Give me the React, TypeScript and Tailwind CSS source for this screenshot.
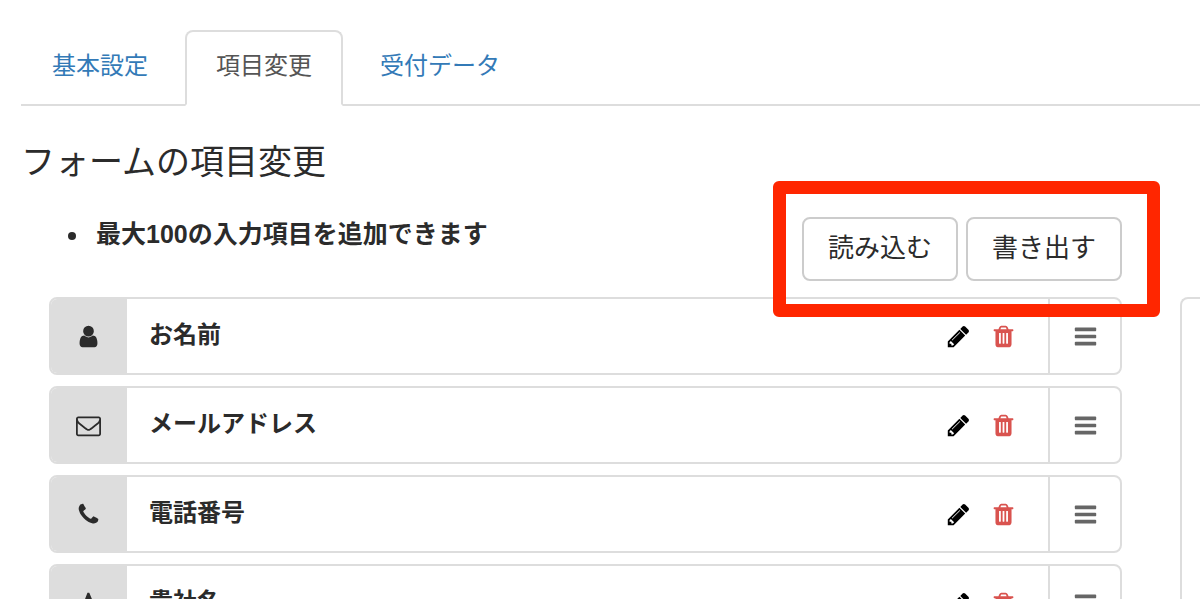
import React, { useState } from "react";

const ICONS = {
  user: "M1536 1399q0 109-62.500 187t-150.500 78h-854q-88 0-150.500-78t-62.500-187q0-85 8.500-160.500t31.500-152 58.500-131 94-89 134.500-34.500q131 128 313 128t313-128q76 0 134.500 34.500t94 89 58.500 131 31.500 152 8.500 160.500zm-256-887q0 159-112.500 271.500t-271.500 112.500-271.500-112.500-112.500-271.500 112.500-271.500 271.500-112.500 271.500 112.500 112.500 271.500z",
  envelope: "M1664 1504v-768q-32 36-69 66-268 206-426 338-51 43-83 67t-86.500 48.500-102.500 24.500h-2q-48 0-102.500-24.500t-86.500-48.500-83-67q-158-132-426-338-37-30-69-66v768q0 13 9.500 22.500t22.500 9.500h1472q13 0 22.500-9.500t9.500-22.500zm0-1051v-24.500l-.5-13-3-12.500-5.500-9-9-7.500-14-2.500h-1472q-13 0-22.500 9.500t-9.500 22.500q0 168 147 284 193 152 401 317 6 5 35 29.500t46 37.500 44.500 31.500 50.500 27.500 43 9h2q20 0 43-9t50.500-27.500 44.500-31.500 46-37.500 35-29.500q208-165 401-317 54-43 100.500-115.500t46.500-131.500zm128-37v1088q0 66-47 113t-113 47h-1472q-66 0-113-47t-47-113v-1088q0-66 47-113t113-47h1472q66 0 113 47t47 113z",
  phone: "M1600 1240q0 27-10 70.500t-21 68.500q-21 50-122 106-94 51-186 51-27 0-53-3.500t-57.500-12.500-47-14.500-55.500-20.500-49-18q-98-35-175-83-127-79-264-216t-216-264q-48-77-83-175-3-9-18-49t-20.500-55.500-14.500-47-12.500-57.500-3.500-53q0-92 51-186 56-101 106-122 25-11 68.500-21t70.500-10q14 0 21 3 18 6 53 76 11 19 30 54t35 63.500 31 53.500q3 4 17.500 25t21.500 35.500 7 28.500q0 20-28.500 50t-62 55-62 53-28.500 46q0 9 5 22.500t8.500 20.500 14 24 11.500 19q76 137 174 235t235 174q2 1 19 11.500t24 14 20.500 8.500 22.500 5q18 0 46-28.500t53-62 55-62 50-28.500q14 0 28.500 7t35.500 21.500 25 17.500q25 15 53.500 31t63.500 35 54 30q70 35 76 53 3 7 3 21z",
  font: "M789 559l-170 450q33 0 136.500 2t160.500 2q19 0 57-2-87-253-184-452zm-725 1105l2-79q23-7 56-12.500t57-10.500 49.500-14.500 44.500-29 31-50.500l237-616 280-724h128q8 14 11 21l205 480q33 78 106 257.500t114 274.500q15 34 58 144.500t72 168.500q20 45 35 57 19 15 88 29.500t84 20.500q6 38 6 57 0 4-.5 13t-.5 13q-63 0-190-8t-191-8q-76 0-215 7t-178 8q0-43 4-78l131-28q1 0 12.500-2.500t15.500-3.500 14.500-4.500 15-6.500 11-8 9-11 2.500-14q0-16-31-96.500t-72-177.500-42-100l-450-2q-26 58-76.500 195.500t-50.500 162.500q0 22 14 37.500t43.500 24.500 48.500 13.500 57 8.500 41 4q1 19 1 58 0 9-2 27-58 0-174.500-10t-174.500-10q-8 0-26.500 4t-21.500 4q-80 14-188 14z",
  pencil: "M491 1536l91-91-235-235-91 91v107h128v128h107zm523-928q0-22-22-22-10 0-17 7l-542 542q-7 7-7 17 0 22 22 22 10 0 17-7l542-542q7-7 7-17zm-54-192l416 416-832 832h-416v-416zm683 96q0 53-37 90l-166 166-416-416 166-165q36-38 90-38 53 0 91 38l235 234q37 39 37 91z",
  trash: "M704 1376v-704q0-14-9-23t-23-9h-64q-14 0-23 9t-9 23v704q0 14 9 23t23 9h64q14 0 23-9t9-23zm256 0v-704q0-14-9-23t-23-9h-64q-14 0-23 9t-9 23v704q0 14 9 23t23 9h64q14 0 23-9t9-23zm256 0v-704q0-14-9-23t-23-9h-64q-14 0-23 9t-9 23v704q0 14 9 23t23 9h64q14 0 23-9t9-23zm-544-992h448l-48-117q-7-9-17-11h-317q-10 2-17 11zm928 32v64q0 14-9 23t-23 9h-96v948q0 83-47 143.500t-113 60.500h-832q-66 0-113-58.500t-47-141.500v-952h-96q-14 0-23-9t-9-23v-64q0-14 9-23t23-9h309l70-167q15-37 54-63t79-26h320q40 0 79 26t54 63l70 167h309q14 0 23 9t9 23z",
  bars: "M1664 1344v128q0 26-19 45t-45 19h-1408q-26 0-45-19t-19-45v-128q0-26 19-45t45-19h1408q26 0 45 19t19 45zm0-512v128q0 26-19 45t-45 19h-1408q-26 0-45-19t-19-45v-128q0-26 19-45t45-19h1408q26 0 45 19t19 45zm0-512v128q0 26-19 45t-45 19h-1408q-26 0-45-19t-19-45v-128q0-26 19-45t45-19h1408q26 0 45 19t19 45z",
};

type IconName = keyof typeof ICONS;

function Icon({ name }: { name: IconName }) {
  return (
    <svg viewBox="0 0 1792 1792" className="h-[25px] w-[25px] shrink-0" fill="currentColor" aria-hidden="true">
      <path d={ICONS[name]} />
    </svg>
  );
}

const TABS = ["基本設定", "項目変更", "受付データ"];

const FIELDS: { icon: IconName; label: string }[] = [
  { icon: "user", label: "お名前" },
  { icon: "envelope", label: "メールアドレス" },
  { icon: "phone", label: "電話番号" },
  { icon: "font", label: "貴社名" },
];

function FieldRow({ icon, label }: { icon: IconName; label: string }) {
  return (
    <li className="flex h-[78px] overflow-hidden rounded-lg border-2 border-[#ddd] bg-white">
      <div className="flex w-[76px] items-center justify-center bg-[#ddd] pr-0.5">
        <Icon name={icon} />
      </div>
      <span className="flex flex-1 items-center pb-0.5 pl-[22px] font-bold">{label}</span>
      <div className="flex items-center gap-5 pr-8">
        <button type="button" aria-label={`${label}を編集`} className="cursor-pointer text-black">
          <Icon name="pencil" />
        </button>
        <button type="button" aria-label={`${label}を削除`} className="cursor-pointer text-[#d9534f]">
          <Icon name="trash" />
        </button>
      </div>
      <button
        type="button"
        aria-label={`${label}を並べ替え`}
        className="flex w-[72px] cursor-move items-center justify-center border-l-2 border-[#ddd] text-[#666]"
      >
        <Icon name="bars" />
      </button>
    </li>
  );
}

export default function App() {
  const [activeTab, setActiveTab] = useState(1);

  return (
    <div className="h-screen overflow-hidden bg-white pt-[30px] pl-[21px] font-['Liberation_Sans','Noto_Sans_CJK_JP',sans-serif] text-2xl leading-9 text-[#2b2b2b]">
      {/* Tabs */}
      <nav className="flex gap-1.5 border-b-2 border-[#ddd]">
        {TABS.map((tab, i) => (
          <a
            key={tab}
            href="#"
            onClick={() => setActiveTab(i)}
            className={
              i === activeTab
                ? "-mb-0.5 rounded-t-lg border-2 border-[#ddd] border-b-white bg-white px-[29px] pt-4 pb-5 text-[#555]"
                : "-mb-0.5 border-2 border-transparent px-[29px] pt-4 pb-5 text-[#337ab7]"
            }
          >
            {tab}
          </a>
        ))}
      </nav>

      <h1 className="mt-8 text-[34px] leading-12">フォームの項目変更</h1>

      {/* Note and import / export */}
      <div className="mt-[31px] flex items-start justify-between pr-[78px]">
        <ul className="list-disc pl-[69px] text-[25px] leading-[34px] font-bold">
          <li className="pl-1.5">最大100の入力項目を追加できます</li>
        </ul>
        <div className="relative flex gap-2 text-[26px]">
          <button type="button" className="h-16 cursor-pointer rounded-lg border-2 border-[#ccc] bg-white px-6 pb-0.5">
            読み込む
          </button>
          <button type="button" className="h-16 cursor-pointer rounded-lg border-2 border-[#ccc] bg-white px-6 pb-0.5">
            書き出す
          </button>
          <div className="pointer-events-none absolute -top-9 -right-[38px] -bottom-9 -left-[29px] rounded-md border-13 border-[#ff2600]" />
        </div>
      </div>

      {/* Field list, with the settings panel beside it */}
      <div className="mt-4 flex gap-[58px] pl-7">
        <ul className="flex flex-1 flex-col gap-[11px]">
          {FIELDS.map((field) => (
            <FieldRow key={field.label} icon={field.icon} label={field.label} />
          ))}
        </ul>
        <aside className="w-5 rounded-l-lg border-2 border-r-0 border-[#ddd]" />
      </div>
    </div>
  );
}
